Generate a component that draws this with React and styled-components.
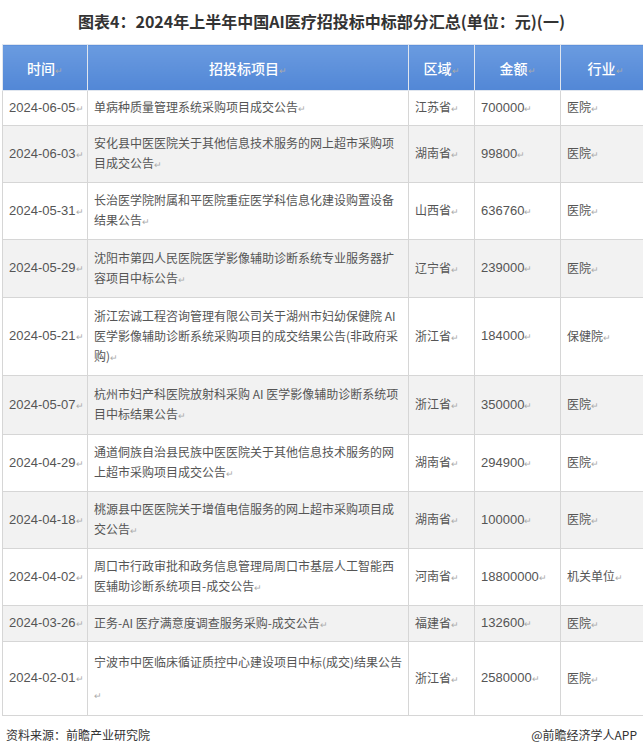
import React from 'react';
import styled, { createGlobalStyle } from 'styled-components';

const Global = createGlobalStyle`
  body { margin: 0; background: #fff; font-family: "Noto Sans CJK SC", "Noto Sans", sans-serif; }
`;

const rows = [
  ['2024-06-05', '单病种质量管理系统采购项目成交公告', '江苏省', '700000', '医院', 35],
  ['2024-06-03', '安化县中医医院关于其他信息技术服务的网上超市采购项目成交公告', '湖南省', '99800', '医院', 57],
  ['2024-05-31', '长治医学院附属和平医院重症医学科信息化建设购置设备结果公告', '山西省', '636760', '医院', 57],
  ['2024-05-29', '沈阳市第四人民医院医学影像辅助诊断系统专业服务器扩容项目中标公告', '辽宁省', '239000', '医院', 58],
  ['2024-05-21', '浙江宏诚工程咨询管理有限公司关于湖州市妇幼保健院 AI 医学影像辅助诊断系统采购项目的成交结果公告(非政府采购)', '浙江省', '184000', '保健院', 78],
  ['2024-05-07', '杭州市妇产科医院放射科采购 AI 医学影像辅助诊断系统项目中标结果公告', '浙江省', '350000', '医院', 59],
  ['2024-04-29', '通道侗族自治县民族中医医院关于其他信息技术服务的网上超市采购项目成交公告', '湖南省', '294900', '医院', 57],
  ['2024-04-18', '桃源县中医医院关于增值电信服务的网上超市采购项目成交公告', '湖南省', '100000', '医院', 57],
  ['2024-04-02', '周口市行政审批和政务信息管理局周口市基层人工智能西医辅助诊断系统项目-成交公告', '河南省', '18800000', '机关单位', 57],
  ['2024-03-26', '正务-AI 医疗满意度调查服务采购-成交公告', '福建省', '132600', '医院', 36],
  ['2024-02-01', '宁波市中医临床循证质控中心建设项目中标(成交)结果公告', '浙江省', '2580000', '医院', 74],
];

const Title = styled.h1`
  margin: 0; height: 44px; line-height: 42px; text-align: center;
  font-size: 16px; font-weight: 700; color: #333;
`;
const Table = styled.table`
  border-collapse: collapse; table-layout: fixed; width: 648px; margin-left: 2px;
  font-size: 12px; color: #555;
`;
const Th = styled.th`
  background: linear-gradient(#6a9be0, #5287d6); color: #fff; font-weight: 500;
  font-size: 14px; height: 43px; border: 1px solid #e0e6ef; text-align: center;
`;
const Tr = styled.tr`
  background: ${p => (p.$alt ? '#f2f2f2' : '#fff')};
`;
const Td = styled.td`
  border: 1px solid #d6d6d6; padding: 0 4px 0 6px; vertical-align: middle;
  line-height: ${p => (p.$tall ? '32px' : '20px')};
  white-space: ${p => (p.$nowrap ? 'nowrap' : 'normal')};
  font-family: ${p => (p.$num ? '"Liberation Sans", sans-serif' : 'inherit')};
  font-size: ${p => (p.$num ? '13px' : '12px')};
  text-align: ${p => (p.$center ? 'center' : 'left')};
`;
const Mark = styled.span`color: #aaa; font-size: 9px;`;
const Footer = styled.div`
  display: flex; justify-content: space-between; padding: 10px 6px 0 6px;
  font-size: 12px; color: #333;
`;

const R = () => <Mark>↵</Mark>;

export default function App() {
  return (
    <>
      <Global />
      <Title>图表4：2024年上半年中国AI医疗招投标中标部分汇总(单位：元)(一)</Title>
      <Table>
        <colgroup>
          <col style={{ width: 85 }} /><col style={{ width: 321 }} /><col style={{ width: 66 }} />
          <col style={{ width: 86 }} /><col style={{ width: 90 }} />
        </colgroup>
        <thead>
          <tr><Th>时间<R /></Th><Th>招投标项目<R /></Th><Th>区域<R /></Th><Th>金额<R /></Th><Th>行业<R /></Th></tr>
        </thead>
        <tbody>
          {rows.map((r, i) => (
            <Tr key={i} $alt={i % 2 === 1} style={{ height: r[5] }}>
              <Td $nowrap $num>{r[0]}<R /></Td>
              <Td $tall={i === 10}>{r[1]}<R /></Td>
              <Td $nowrap>{r[2]}<R /></Td>
              <Td $nowrap $num>{r[3]}<R /></Td>
              <Td $nowrap>{r[4]}<R /></Td>
            </Tr>
          ))}
        </tbody>
      </Table>
      <Footer><span>资料来源：前瞻产业研究院</span><span>@前瞻经济学人APP</span></Footer>
    </>
  );
}
